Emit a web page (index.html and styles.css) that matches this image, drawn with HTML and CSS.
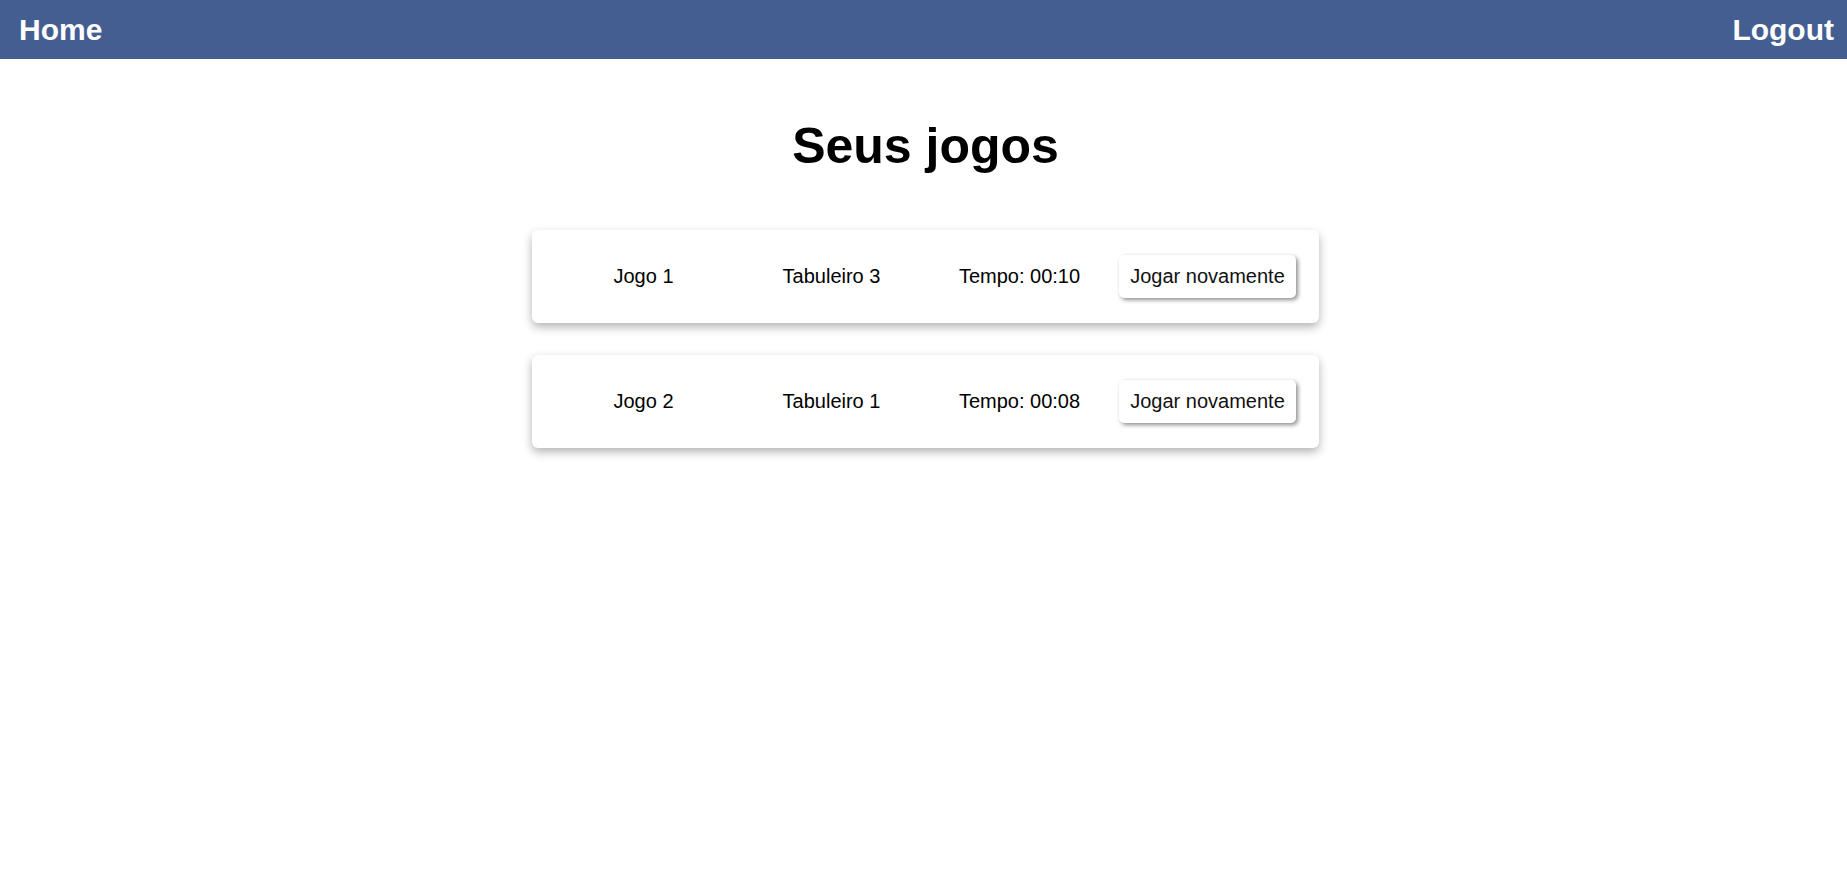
FILE: index.html
```html
<!DOCTYPE html>
<html lang="pt">
<head>
<meta charset="utf-8">
<title>Seus jogos</title>
<link rel="stylesheet" href="styles.css">
</head>
<body>
<header class="topbar">
  <a class="nav-link" href="#">Home</a>
  <a class="nav-link" href="#">Logout</a>
</header>
<main class="content">
  <h1 class="title">Seus jogos</h1>
  <ul class="game-list">
    <li class="game-card">
      <span class="cell">Jogo 1</span>
      <span class="cell">Tabuleiro 3</span>
      <span class="cell">Tempo: 00:10</span>
      <span class="cell"><button class="replay-btn" type="button">Jogar novamente</button></span>
    </li>
    <li class="game-card">
      <span class="cell">Jogo 2</span>
      <span class="cell">Tabuleiro 1</span>
      <span class="cell">Tempo: 00:08</span>
      <span class="cell"><button class="replay-btn" type="button">Jogar novamente</button></span>
    </li>
  </ul>
</main>
</body>
</html>
```
FILE: styles.css
```css
* {
  box-sizing: border-box;
}

html, body {
  margin: 0;
  padding: 0;
  background: #ffffff;
  font-family: "Liberation Sans", Arial, sans-serif;
  color: #000000;
}

body {
  min-height: 889px;
}

.topbar {
  height: 59px;
  background: #445e92;
  display: flex;
  align-items: center;
  justify-content: space-between;
  padding: 0 13px 0 19px;
}

.nav-link {
  color: #ffffff;
  font-weight: bold;
  font-size: 30px;
  text-decoration: none;
}

.content {
  display: flex;
  flex-direction: column;
  align-items: center;
  padding: 58px 0 40px 4px;
}

.title {
  margin: 0 0 55px 0;
  font-size: 50px;
  font-weight: bold;
  line-height: normal;
}

.game-list {
  list-style: none;
  margin: 0;
  padding: 0;
  display: flex;
  flex-direction: column;
  gap: 32px;
  width: 787px;
}

.game-card {
  display: grid;
  grid-template-columns: repeat(4, 1fr);
  align-items: center;
  justify-items: center;
  padding: 25px 17.5px;
  background: #ffffff;
  border-radius: 6px;
  box-shadow: 0 4px 10px rgba(0, 0, 0, 0.3);
  font-size: 20px;
}

.cell {
  white-space: nowrap;
}

.replay-btn {
  font-family: "Liberation Sans", Arial, sans-serif;
  font-size: 20px;
  color: #111111;
  background: #ffffff;
  border: none;
  border-radius: 5px;
  padding: 10px 11px;
  height: 43px;
  box-shadow: 2px 2px 4px rgba(0, 0, 0, 0.45);
  cursor: pointer;
}
```
